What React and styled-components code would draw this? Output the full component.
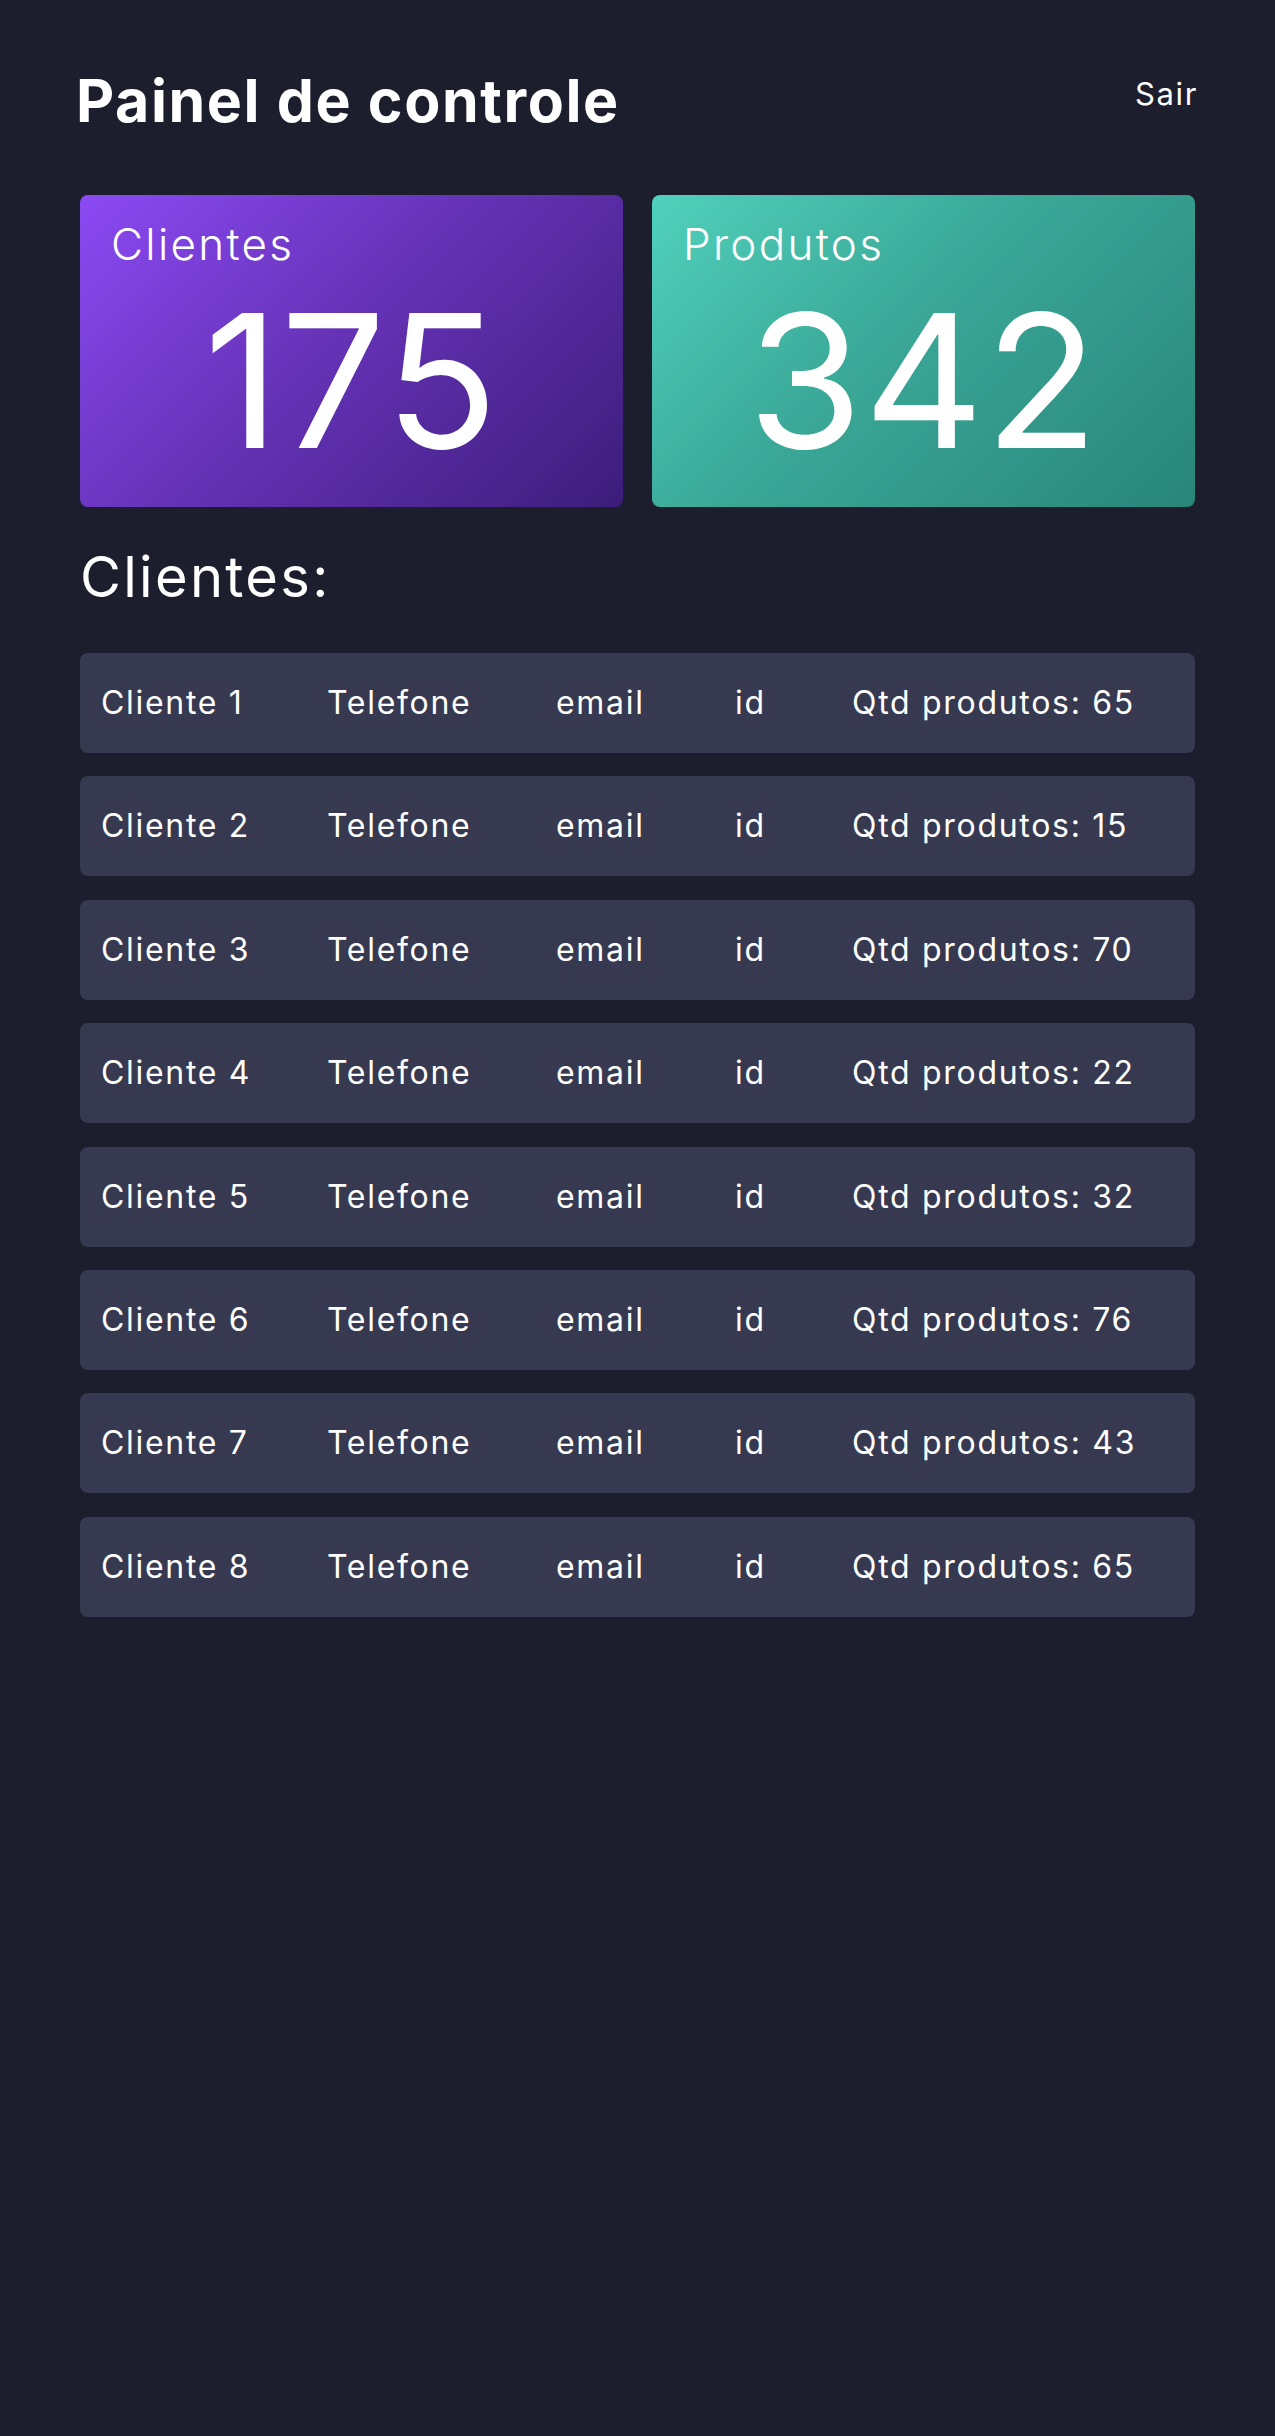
import React from 'react';
import styled, { createGlobalStyle } from 'styled-components';

const GlobalStyle = createGlobalStyle`
  * {
    box-sizing: border-box;
  }

  body {
    margin: 0;
    background-color: #1c1e2e;
    color: #ffffff;
    font-family: Inter, "Open Sans", sans-serif;
  }
`;

const Page = styled.div`
  min-height: 2436px;
  padding: 0 80px;
  background-color: #1c1e2e;
`;

const Header = styled.header`
  display: flex;
  justify-content: space-between;
  align-items: flex-start;
  padding-top: 71px;
`;

const Title = styled.h1`
  margin: 0 0 0 -4px;
  font-size: 59px;
  font-weight: 700;
  line-height: 1;
  letter-spacing: 1.6px;
`;

const LogoutButton = styled.button`
  margin: 7px -3px 0 0;
  padding: 0;
  border: none;
  background: none;
  color: #ffffff;
  font-family: inherit;
  font-size: 31px;
  line-height: 1;
  letter-spacing: 1.6px;
  cursor: pointer;
`;

const Cards = styled.section`
  display: grid;
  grid-template-columns: 1fr 1fr;
  gap: 29px;
  margin-top: 65px;
`;

const Card = styled.div`
  height: 312px;
  padding: 27px 31px 0;
  border-radius: 8px;
  background: ${({ $variant }) =>
    $variant === 'green'
      ? 'linear-gradient(135deg, #50d1bb 0%, #3aa797 45%, #28857a 100%)'
      : 'linear-gradient(135deg, #8c4af4 0%, #6633b8 45%, #3c1d7a 100%)'};
`;

const CardLabel = styled.div`
  font-size: 44px;
  font-weight: 300;
  line-height: 1;
  letter-spacing: 2.3px;
`;

const CardValue = styled.div`
  margin-top: 22px;
  font-size: 186px;
  font-weight: 400;
  line-height: 1;
  text-align: center;
  letter-spacing: 1px;
`;

const SectionTitle = styled.h2`
  margin: 42px 0 0;
  font-size: 56px;
  font-weight: 400;
  line-height: 1;
  letter-spacing: 2.3px;
`;

const ClientList = styled.ul`
  display: flex;
  flex-direction: column;
  gap: 23.4px;
  margin: 48px 0 0;
  padding: 0;
  list-style: none;
`;

const ClientRow = styled.li`
  display: grid;
  grid-template-columns: 226px 229px 179px 117px auto;
  align-items: center;
  height: 100px;
  padding-left: 21px;
  border-radius: 8px;
  background-color: #363950;
  font-size: 32px;
  line-height: 1;
  letter-spacing: 1.7px;
`;

const clients = [
  { name: 'Cliente 1', qtd: 65 },
  { name: 'Cliente 2', qtd: 15 },
  { name: 'Cliente 3', qtd: 70 },
  { name: 'Cliente 4', qtd: 22 },
  { name: 'Cliente 5', qtd: 32 },
  { name: 'Cliente 6', qtd: 76 },
  { name: 'Cliente 7', qtd: 43 },
  { name: 'Cliente 8', qtd: 65 },
];

const App = () => {
  return (
    <>
      <GlobalStyle />
      <Page>
        <Header>
          <Title>Painel de controle</Title>
          <LogoutButton>Sair</LogoutButton>
        </Header>

        <Cards>
          <Card>
            <CardLabel>Clientes</CardLabel>
            <CardValue>175</CardValue>
          </Card>
          <Card $variant="green">
            <CardLabel>Produtos</CardLabel>
            <CardValue>342</CardValue>
          </Card>
        </Cards>

        <SectionTitle>Clientes:</SectionTitle>

        <ClientList>
          {clients.map((c) => (
            <ClientRow key={c.name}>
              <span>{c.name}</span>
              <span>Telefone</span>
              <span>email</span>
              <span>id</span>
              <span>Qtd produtos: {c.qtd}</span>
            </ClientRow>
          ))}
        </ClientList>
      </Page>
    </>
  );
};

export default App;
